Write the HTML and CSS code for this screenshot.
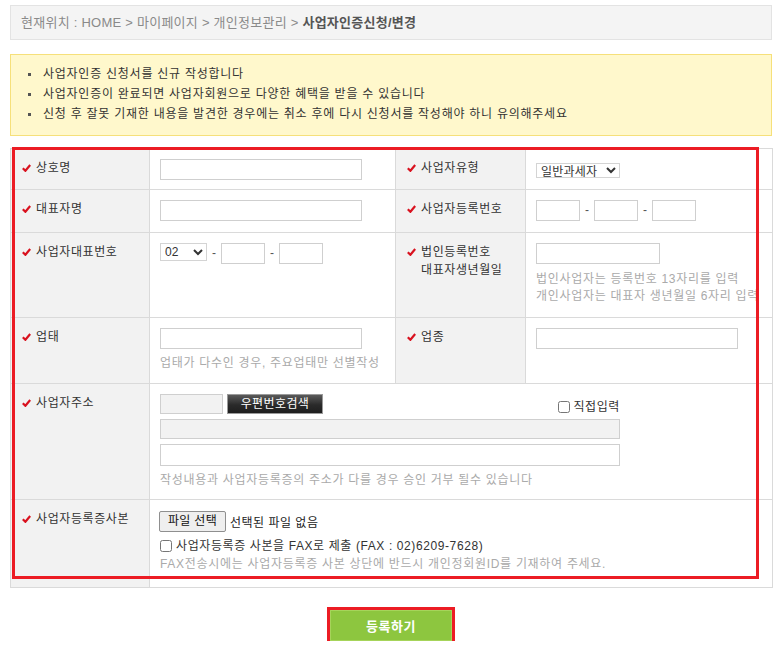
FILE: index.html
```html
<!DOCTYPE html>
<html lang="ko">
<head>
<meta charset="utf-8">
<title>사업자인증신청/변경</title>
<link rel="stylesheet" href="styles.css">
</head>
<body>
<div class="page">
  <div class="crumb">현재위치 : HOME &gt; 마이페이지 &gt; 개인정보관리 &gt; <strong>사업자인증신청/변경</strong></div>

  <ul class="notice">
    <li>사업자인증 신청서를 신규 작성합니다</li>
    <li>사업자인증이 완료되면 사업자회원으로 다양한 혜택을 받을 수 있습니다</li>
    <li>신청 후 잘못 기재한 내용을 발견한 경우에는 취소 후에 다시 신청서를 작성해야 하니 유의해주세요</li>
  </ul>

  <div class="form-wrap">
    <table class="form">
      <colgroup>
        <col class="c-lab1"><col class="c-val1"><col class="c-lab2"><col class="c-val2">
      </colgroup>
      <tr class="r1">
        <th><div class="lab"><svg class="chk" viewBox="0 0 9 8" width="9" height="8"><path d="M0.8 4.2 L3.4 6.8 L8.2 1" fill="none" stroke="#d9121f" stroke-width="2.2"/></svg><span>상호명</span></div></th>
        <td><input class="txt w202" type="text"></td>
        <th><div class="lab"><svg class="chk" viewBox="0 0 9 8" width="9" height="8"><path d="M0.8 4.2 L3.4 6.8 L8.2 1" fill="none" stroke="#d9121f" stroke-width="2.2"/></svg><span>사업자유형</span></div></th>
        <td><select class="sel sel-type"><option>일반과세자</option><option>간이과세자</option><option>법인사업자</option></select></td>
      </tr>
      <tr class="r2">
        <th><div class="lab"><svg class="chk" viewBox="0 0 9 8" width="9" height="8"><path d="M0.8 4.2 L3.4 6.8 L8.2 1" fill="none" stroke="#d9121f" stroke-width="2.2"/></svg><span>대표자명</span></div></th>
        <td><input class="txt w202" type="text"></td>
        <th><div class="lab"><svg class="chk" viewBox="0 0 9 8" width="9" height="8"><path d="M0.8 4.2 L3.4 6.8 L8.2 1" fill="none" stroke="#d9121f" stroke-width="2.2"/></svg><span>사업자등록번호</span></div></th>
        <td>
          <div class="triple">
            <input class="txt w44" type="text"><span class="dash">-</span><input class="txt w44" type="text"><span class="dash">-</span><input class="txt w44" type="text">
          </div>
        </td>
      </tr>
      <tr class="r3">
        <th><div class="lab"><svg class="chk" viewBox="0 0 9 8" width="9" height="8"><path d="M0.8 4.2 L3.4 6.8 L8.2 1" fill="none" stroke="#d9121f" stroke-width="2.2"/></svg><span>사업자대표번호</span></div></th>
        <td>
          <div class="triple">
            <select class="sel sel-tel"><option>02</option><option>031</option><option>032</option></select><span class="dash">-</span><input class="txt w44" type="text"><span class="dash">-</span><input class="txt w44" type="text">
          </div>
        </td>
        <th><div class="lab"><svg class="chk" viewBox="0 0 9 8" width="9" height="8"><path d="M0.8 4.2 L3.4 6.8 L8.2 1" fill="none" stroke="#d9121f" stroke-width="2.2"/></svg><span>법인등록번호<br>대표자생년월일</span></div></th>
        <td>
          <input class="txt w124" type="text">
          <p class="hint hint-2">법인사업자는 등록번호 13자리를 입력<br>개인사업자는 대표자 생년월일 6자리 입력</p>
        </td>
      </tr>
      <tr class="r4">
        <th><div class="lab"><svg class="chk" viewBox="0 0 9 8" width="9" height="8"><path d="M0.8 4.2 L3.4 6.8 L8.2 1" fill="none" stroke="#d9121f" stroke-width="2.2"/></svg><span>업태</span></div></th>
        <td>
          <input class="txt w202" type="text">
          <p class="hint">업태가 다수인 경우, 주요업태만 선별작성</p>
        </td>
        <th><div class="lab"><svg class="chk" viewBox="0 0 9 8" width="9" height="8"><path d="M0.8 4.2 L3.4 6.8 L8.2 1" fill="none" stroke="#d9121f" stroke-width="2.2"/></svg><span>업종</span></div></th>
        <td><input class="txt w202" type="text"></td>
      </tr>
      <tr class="r5">
        <th><div class="lab"><svg class="chk" viewBox="0 0 9 8" width="9" height="8"><path d="M0.8 4.2 L3.4 6.8 L8.2 1" fill="none" stroke="#d9121f" stroke-width="2.2"/></svg><span>사업자주소</span></div></th>
        <td colspan="3">
          <div class="addr">
            <div class="addr-top">
              <div class="zip">
                <input class="txt zip-in" type="text" readonly>
                <button class="zip-btn" type="button">우편번호검색</button>
              </div>
              <label class="cb-label"><input class="cb" type="checkbox">직접입력</label>
            </div>
            <input class="txt addr-ro" type="text" readonly>
            <input class="txt addr-in" type="text">
          </div>
          <p class="hint">작성내용과 사업자등록증의 주소가 다를 경우 승인 거부 될수 있습니다</p>
        </td>
      </tr>
      <tr class="r6">
        <th><div class="lab"><svg class="chk" viewBox="0 0 9 8" width="9" height="8"><path d="M0.8 4.2 L3.4 6.8 L8.2 1" fill="none" stroke="#d9121f" stroke-width="2.2"/></svg><span>사업자등록증사본</span></div></th>
        <td colspan="3">
          <label class="file">
            <input class="file-in" type="file">
            <span class="file-btn">파일 선택</span><span class="file-name">선택된 파일 없음</span>
          </label>
          <label class="cb-label fax"><input class="cb" type="checkbox">사업자등록증 사본을 FAX로 제출 (FAX : 02)6209-7628)</label>
          <p class="hint hint-fax">FAX전송시에는 사업자등록증 사본 상단에 반드시 개인정회원ID를 기재하여 주세요.</p>
        </td>
      </tr>
    </table>
    <div class="mark"></div>
  </div>

  <div class="actions">
    <button class="submit" type="button">등록하기</button>
  </div>
</div>
</body>
</html>
```

FILE: styles.css
```css
* { box-sizing: border-box; }

body {
  margin: 0;
  background: #fff;
  font-family: "Liberation Sans", "Noto Sans CJK KR", sans-serif;
  font-size: 12px;
  color: #333;
}

.page {
  width: 762px;
  margin-left: 10px;
  padding-top: 5px;
}

.crumb {
  height: 35px;
  border: 1px solid #e3e3e3;
  background: #f4f4f4;
  padding-left: 10px;
  line-height: 34px;
  font-size: 13px;
  color: #8a8a8a;
  letter-spacing: 0.25px;
}
.crumb strong {
  color: #555;
  font-weight: bold;
}

.notice {
  list-style: none;
  margin: 14px 0 0;
  padding: 9px 0 11px 32px;
  background: #fff8cc;
  border: 1px solid #f6e07a;
}
.notice li {
  position: relative;
  line-height: 20px;
  color: #333;
  letter-spacing: 0.75px;
}
.notice li::before {
  content: "";
  position: absolute;
  left: -15px;
  top: 9px;
  width: 3px;
  height: 3px;
  background: #555;
}

.form-wrap {
  position: relative;
  margin-top: 12px;
}

.form {
  width: 762px;
  table-layout: fixed;
  border-collapse: collapse;
  border: 1px solid #dadada;
}
.c-lab1 { width: 139px; }
.c-val1 { width: 246px; }
.c-lab2 { width: 130px; }
.c-val2 { width: 247px; }

.form th,
.form td {
  border: 1px solid #dadada;
  vertical-align: top;
  text-align: left;
}
.form th {
  background: #f2f2f2;
  font-weight: normal;
  padding: 10px 0 0 11px;
}
.form td {
  padding: 10px 0 0 10px;
  white-space: nowrap;
}

.r1 { height: 41px; }
.r2 { height: 43px; }
.r3 { height: 85px; }
.r4 { height: 66px; }
.r5 { height: 116px; }
.r6 { height: 88px; }

.lab {
  display: flex;
  align-items: flex-start;
  gap: 5px;
  line-height: 18px;
  color: #333;
  letter-spacing: 0.6px;
}
.chk {
  flex: none;
  margin-top: 5px;
}

.txt {
  display: block;
  height: 21px;
  border: 1px solid #cfcfcf;
  background: #fff;
  padding: 0 4px;
  font: inherit;
}
.w202 { width: 202px; }
.w44 { width: 44px; }
.w124 { width: 124px; }

.triple {
  display: flex;
  align-items: flex-start;
  gap: 5px;
}
.dash {
  line-height: 21px;
  color: #555;
  width: 4px;
}

.sel {
  font: inherit;
  font-size: 12px;
  color: #333;
  border: 1px solid #d4d4d4;
  background: #fff;
  border-radius: 0;
  padding: 0;
  margin: 0;
}
.sel-type {
  width: 84px;
  height: 15px;
  margin-top: 4px;
  letter-spacing: 0.2px;
}
.sel-tel {
  width: 47px;
  height: 18px;
}

.hint {
  margin: 6px 0 0;
  line-height: 17px;
  color: #aaa;
  letter-spacing: 0.7px;
}
.hint-2 { margin-top: 7px; }

.addr {
  width: 460px;
  display: flex;
  flex-direction: column;
  gap: 5px;
}
.addr-top {
  display: flex;
  justify-content: space-between;
  align-items: center;
  height: 20px;
}
.zip {
  display: flex;
  gap: 4px;
}
.zip-in {
  width: 63px;
  height: 20px;
  background: #f2f2f2;
}
.zip-btn {
  width: 96px;
  height: 20px;
  padding: 0;
  border: 1px solid #9a9a9a;
  background: linear-gradient(#5a5a5a, #2a2a2a 55%, #1e1e1e);
  color: #fff;
  font: inherit;
  font-size: 12px;
  line-height: 18px;
  letter-spacing: 0.4px;
}
.cb-label {
  display: flex;
  align-items: center;
  line-height: 18px;
  color: #333;
  letter-spacing: 0.6px;
  margin-top: 6px;
}
.cb {
  width: 12px;
  height: 12px;
  margin: 0 3px 0 0;
}
.addr-ro {
  width: 460px;
  height: 20px;
  background: #f2f2f2;
}
.addr-in {
  width: 460px;
  height: 22px;
}

.file {
  display: flex;
  align-items: center;
  gap: 4px;
  height: 22px;
}
.file-in {
  display: none;
}
.file-btn {
  display: inline-block;
  height: 21px;
  width: 67px;
  border: 1px solid #8f8f8f;
  border-radius: 2px;
  background: #efefef;
  text-align: center;
  line-height: 19px;
  color: #111;
  letter-spacing: 0.3px;
  margin-left: -1px;
}
.file-name {
  color: #222;
  letter-spacing: 0.5px;
}
.fax {
  margin-top: 5px;
  color: #333;
}
.fax .cb {
  margin-right: 4px;
}
.hint-fax {
  margin-top: 1px;
}

.mark {
  position: absolute;
  left: 2px;
  top: -1px;
  width: 747px;
  height: 432px;
  border: 3px solid #ec1c24;
  pointer-events: none;
}

.actions {
  display: flex;
  justify-content: center;
  padding-top: 22px;
}
.submit {
  width: 122px;
  height: 31px;
  border: 1px solid #a6d45a;
  background: #8dc63f;
  outline: 3px solid #ec1c24;
  color: #fff;
  font: inherit;
  font-size: 13px;
  font-weight: bold;
  letter-spacing: 0.5px;
}
```
